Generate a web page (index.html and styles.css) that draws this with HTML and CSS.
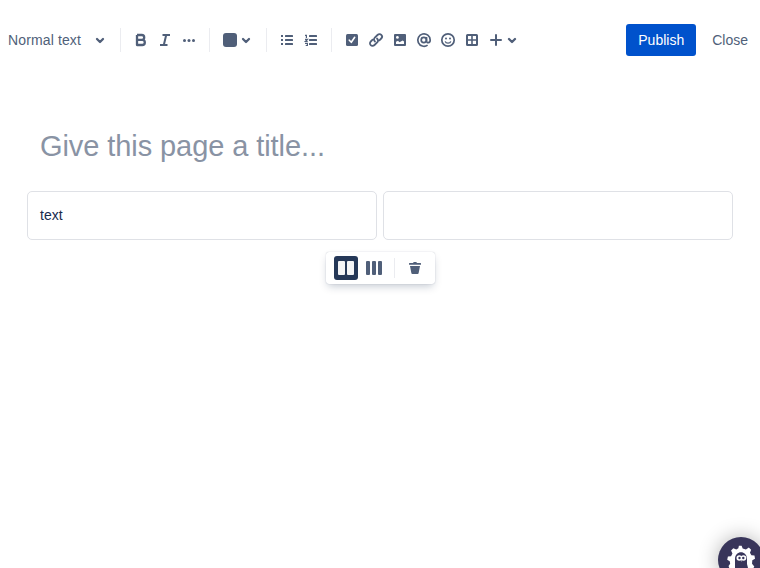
FILE: index.html
```
<!DOCTYPE html>
<html lang="en">
<head>
<meta charset="utf-8">
<title>Page editor</title>
<link rel="stylesheet" href="styles.css">
</head>
<body>
<header class="toolbar">
  <button class="block-type"><span>Normal text</span>
    <svg class="icon" viewBox="0 0 24 24"><path class="chevron" d="M9 11l3 3 3-3"/></svg>
  </button>
  <div class="group">
    <button class="tool"><svg class="icon" viewBox="0 0 24 24"><path class="bold" d="M8 7h4.800a2.300 2.300 0 0 1 0 4.800H8M8 7v10h5.200a2.600 2.600 0 0 0 0-5.200"/></svg></button>
    <button class="tool"><svg class="icon" viewBox="0 0 24 24"><path class="line" d="M9.500 7h7.500M7 17h7.500M13.200 7l-2.400 10"/></svg></button>
    <button class="tool"><svg class="icon" viewBox="0 0 24 24"><circle cx="7.500" cy="12.500" r="1.500"/><circle cx="12" cy="12.500" r="1.500"/><circle cx="16.500" cy="12.500" r="1.500"/></svg></button>
  </div>
  <div class="group color-group">
    <button class="tool color"><span class="swatch"></span>
      <svg class="icon narrow" viewBox="4 0 16 24"><path class="chevron" d="M9 11l3 3 3-3"/></svg></button>
  </div>
  <div class="group">
    <button class="tool"><svg class="icon" viewBox="0 0 24 24"><path d="M6 7h2v2H6zM6 11h2v2H6zM6 15h2v2H6z"/><rect x="10" y="7" width="8" height="2" rx=".5"/><rect x="10" y="11" width="8" height="2" rx=".5"/><rect x="10" y="15" width="8" height="2" rx=".5"/></svg></button>
    <button class="tool"><svg class="icon" viewBox="0 0 24 24"><rect x="10" y="7" width="8" height="2" rx=".5"/><rect x="10" y="11" width="8" height="2" rx=".5"/><rect x="10" y="15" width="8" height="2" rx=".5"/><path class="digits" d="M6 7.400h1.400V10M6 11.400h2.400l-2 1.900h2.300M6 15.400h2.400v2.100H6.700h1.700"/></svg></button>
  </div>
  <div class="group insert-group">
    <button class="tool"><svg class="icon" viewBox="0 0 24 24"><rect x="6" y="6" width="12" height="12" rx="1.500"/><path class="check" d="M9.300 12.200l2 2.100 3.400-5"/></svg></button>
    <button class="tool"><svg class="icon" viewBox="0 0 24 24"><path class="link" d="M11 13.500c-1.300-1.200-1.300-2.800-.2-3.900l2.700-2.600c1.200-1.200 2.800-1.200 3.800-.2s1 2.600-.1 3.700l-1.800 1.800M13 10.500c1.300 1.200 1.300 2.800.2 3.900L10.500 17c-1.200 1.200-2.800 1.200-3.800.2s-1-2.600.1-3.700l1.800-1.800"/></svg></button>
    <button class="tool"><svg class="icon" viewBox="0 0 24 24"><rect x="6" y="6" width="12" height="12" rx="1"/><g class="cutout"><circle cx="9.400" cy="9.400" r="1.400"/><path d="M8 16v-2.300l2-1 1.500 1.500 3.200-1.700L16 13.500V16z"/></g></svg></button>
    <button class="tool"><svg class="icon" viewBox="0 0 24 24"><circle class="mention" cx="11.800" cy="12" r="2.600"/><path class="mention" d="M14.500 9v4.100c0 2.200 3.700 2.400 3.700-1.200a6.200 6.200 0 1 0-2.600 5.200"/></svg></button>
    <button class="tool"><svg class="icon" viewBox="0 0 24 24"><circle class="face" cx="12" cy="12" r="6.200"/><circle cx="10" cy="10.500" r="1"/><circle cx="14" cy="10.500" r="1"/><path class="smile" d="M9.200 13.300c.6 2.300 5 2.300 5.600 0"/></svg></button>
    <button class="tool"><svg class="icon" viewBox="0 0 24 24"><path fill-rule="evenodd" d="M7.500 6h9A1.500 1.500 0 0 1 18 7.500v9a1.500 1.500 0 0 1-1.500 1.500h-9A1.500 1.500 0 0 1 6 16.500v-9A1.500 1.500 0 0 1 7.500 6zM8 8v3.200h3.200V8zm4.800 0v3.200H16V8zM8 12.800V16h3.200v-3.200zm4.800 0V16H16v-3.200z"/></svg></button>
    <button class="tool insert"><svg class="icon" viewBox="0 0 24 24"><path class="line round" d="M12 7v10M7 12h10"/></svg><svg class="icon narrow" viewBox="4 0 16 24"><path class="chevron" d="M9 11l3 3 3-3"/></svg></button>
  </div>
  <div class="actions">
    <button class="publish">Publish</button>
    <button class="close">Close</button>
  </div>
</header>
<main class="page">
  <h1 class="title">Give this page a title...</h1>
  <section class="columns">
    <div class="column"><p>text</p></div>
    <div class="column"></div>
  </section>
  <div class="layout-bar">
    <button class="tool selected"><svg class="icon" viewBox="0 0 24 24"><rect x="4" y="5" width="7" height="14" rx="1"/><rect x="13" y="5" width="7" height="14" rx="1"/></svg></button>
    <button class="tool"><svg class="icon" viewBox="0 0 24 24"><rect x="4" y="5" width="4" height="14" rx="1"/><rect x="10" y="5" width="4" height="14" rx="1"/><rect x="16" y="5" width="4" height="14" rx="1"/></svg></button>
    <span class="divider"></span>
    <button class="tool"><svg class="icon" viewBox="0 0 24 24"><path d="M7 10h10l-1.400 7.200a1 1 0 0 1-1 .8H9.400a1 1 0 0 1-1-.8zM6.500 7H10c0-1.300 4-1.300 4 0h3.500a.5.500 0 0 1 .5.500V8.700H6V7.500a.5.500 0 0 1 .5-.5z"/></svg></button>
  </div>
</main>
<button class="help"><svg viewBox="0 0 46 46">
  <path class="gear" transform="translate(2 1.500) scale(.9)" d="M21 8l3 0 1.200 3.200 3.600 1 3.200-2.200 2.600 2.400-1.300 3.500 1.600 2.600 3.400.3.600 3.600-3 1.700-.3 3.900 2.500 3-2.200 4H11l-1.500-4.500 1.800-2.400-.5-2.800-2.800-1.700.8-3.500 3.500-.5 1.500-3-1.500-3.300 2.500-2.500 3.300 1.300 2.300-1.200z"/>
  <path class="shade" d="M17 39V22c0-9 12-9 12 0v5l3 12z"/>
  <circle class="eye" cx="21.300" cy="21" r="2.800"/><circle class="eye" cx="25.500" cy="21" r="2.800"/>
  <circle class="pupil" cx="21.500" cy="21" r="1.200"/><circle class="pupil" cx="25.300" cy="21" r="1.200"/>
  <path class="beak" d="M22.400 23.200h2l-1 1.500z"/>
</svg></button>
</body>
</html>
```
FILE: styles.css
```
* { box-sizing: border-box; }
body {
  margin: 0;
  height: 568px;
  overflow: hidden;
  background: #fff;
  color: #172b4d;
  font: 14px/20px "Liberation Sans", Arial, sans-serif;
}
button {
  padding: 0;
  border: 0;
  background: none;
  color: #505f79;
  font: inherit;
}
.icon { display: block; width: 24px; height: 24px; flex: none; fill: currentColor; }
.icon.narrow { width: 16px; }
.chevron, .line, .bold, .digits, .link, .mention, .face, .smile { fill: none; stroke: currentColor; }
.chevron { stroke-width: 2.3; stroke-linecap: round; stroke-linejoin: round; }
.line { stroke-width: 2; }
.bold { stroke-width: 2.3; stroke-linejoin: round; }
.round { stroke-linecap: round; }
.digits { stroke-width: 1.2; }
.link { stroke-width: 1.8; stroke-linecap: round; }
.mention, .face { stroke-width: 1.7; }
.smile { stroke-width: 1.3; }
.check { fill: none; stroke: #fff; stroke-width: 1.6; stroke-linecap: round; stroke-linejoin: round; }
.cutout { fill: #fff; }

.toolbar { display: flex; align-items: center; height: 80px; padding: 0 0 0 8px; }
.block-type { display: flex; align-items: center; justify-content: space-between; width: 104px; height: 24px; letter-spacing: .13px; }
.group { display: flex; align-items: center; height: 24px; padding: 0 8px; border-left: 1px solid #ebecf0; }
.block-type + .group { margin-left: 8px; }
.color-group { padding: 0 12px 0 13px; }
.tool { display: flex; align-items: center; height: 24px; }
.color-group .icon { margin-left: 1px; }
.swatch { width: 14px; height: 14px; border-radius: 3px; background: #505f79; }
.insert .narrow { margin-left: -4px; }
.actions { display: flex; gap: 4px; margin-left: auto; }
.actions button { height: 32px; padding: 0 12px; border-radius: 3px; }
.actions .publish { background: #0052cc; color: #fff; }

.page { padding: 50px 27px 0; }
.title { margin: 0 13px; color: #8993a4; font-size: 29px; font-weight: 400; line-height: 32px; letter-spacing: -.08px; }
.columns { display: flex; gap: 6px; margin-top: 29px; }
.column { flex: 1; height: 49px; padding: 13px 12px; border: 1px solid #dfe1e6; border-radius: 5px; }
.column p { margin: 0; }
.layout-bar {
  display: flex;
  align-items: center;
  width: 109px;
  height: 32px;
  margin: 12px auto 0;
  padding: 4px 8px;
  border-radius: 3px;
  background: #fff;
  box-shadow: 0 0 1px rgba(9, 30, 66, .31), 0 4px 8px -2px rgba(9, 30, 66, .25);
}
.layout-bar .selected { margin-right: 4px; border-radius: 3px; background: #253858; color: #f4f5f7; }
.divider { width: 1px; height: 20px; margin: 0 8px; background: #ebecf0; }

.help {
  position: fixed;
  left: 718px;
  top: 537px;
  width: 46px;
  height: 46px;
  border-radius: 50%;
  background: #38355a;
  box-shadow: 0 0 20px rgba(0, 0, 0, .3);
}
.help svg { display: block; width: 46px; height: 46px; }
.gear, .eye { fill: #fff; }
.shade, .pupil { fill: #38355a; }
.beak { fill: #c9c9d5; }
```
